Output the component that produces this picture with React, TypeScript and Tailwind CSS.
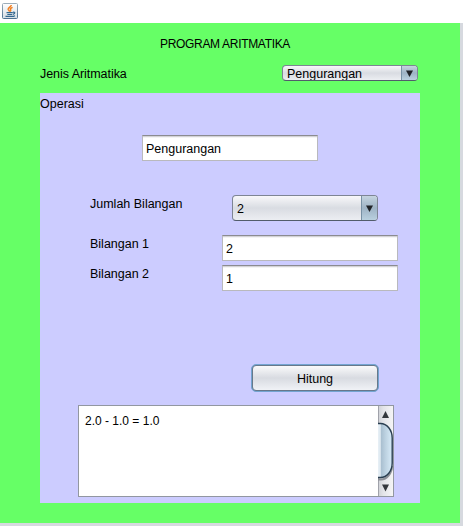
import React from "react";

function JavaIcon() {
  return (
    <svg width="16" height="16" viewBox="0 0 16 16" fill="none">
      <defs>
        <linearGradient id="frame" x1="0" y1="0" x2="0" y2="1">
          <stop offset="0" stopColor="#9cadba" />
          <stop offset="1" stopColor="#4d7391" />
        </linearGradient>
        <linearGradient id="face" x1="0" y1="0" x2="0" y2="1">
          <stop offset="0" stopColor="#ffffff" />
          <stop offset="1" stopColor="#d5dde4" />
        </linearGradient>
      </defs>
      <rect x="0.5" y="0.5" width="15" height="15" rx="1" fill="url(#face)" stroke="url(#frame)" />
      <path d="M9.3 2C9.3 3.8 5.8 4.6 6.2 6.4C6.5 7.3 7.4 7.6 7.5 8.6M10.6 4.4C8.8 5 8 5.8 8.6 6.6C9 7.3 8.6 8 8.2 8.5" stroke="#f07f22" strokeWidth="1.5" />
      <path d="M4.5 9.6H10.8M5.3 11.5H10.3M11 9.3C13.4 8.6 13.4 10.8 11 11.4M3.5 13.4H11.5L13 12.8" stroke="#35688f" strokeWidth="1.2" />
    </svg>
  );
}

function DownArrow() {
  return (
    <svg width="7" height="7" viewBox="0 0 7 7">
      <path d="M0 0.5H7L3.5 7Z" fill="#202328" />
    </svg>
  );
}

function Combo({ value, small }: { value: string; small?: boolean }) {
  return (
    <div
      className={
        "flex overflow-hidden rounded-[4px] border border-[#7e8594] border-b-[#525c6b] bg-linear-to-b from-[#f8f8fa] via-[#d9dce2] to-[#eceef2] " +
        (small ? "h-4 w-[136px]" : "h-[26px] w-[146px]")
      }
    >
      <span className={"flex-1 pl-1 " + (small ? "leading-4" : "leading-[26px]")}>{value}</span>
      <span className="flex w-4 items-center justify-center border-l border-[#7891a5] bg-linear-to-b from-[#c5d4df] via-[#9eb3c5] to-[#b9d0df]">
        <DownArrow />
      </span>
    </div>
  );
}

function Field({ value }: { value: string }) {
  return (
    <div className="h-[26px] w-[176px] border border-[#b9b9bd] border-t-[#8b8b90] bg-white pl-[3px] leading-[26px] shadow-[inset_0_1px_0_#d3d3d6,inset_0_2px_0_#f4f4f5]">
      {value}
    </div>
  );
}

function ScrollBar() {
  return (
    <svg width="15" height="90" viewBox="0 0 15 90">
      <defs>
        <linearGradient id="track" x1="0" y1="0" x2="1" y2="0">
          <stop offset="0" stopColor="#cfd1d6" />
          <stop offset="0.35" stopColor="#e3e4e8" />
          <stop offset="1" stopColor="#f5f5f6" />
        </linearGradient>
        <linearGradient id="thumb" x1="0" y1="0" x2="1" y2="0">
          <stop offset="0" stopColor="#e9f1f7" />
          <stop offset="0.17" stopColor="#dce7ef" />
          <stop offset="0.22" stopColor="#a9bfd0" />
          <stop offset="0.55" stopColor="#bed3e2" />
          <stop offset="1" stopColor="#d8ebf8" />
        </linearGradient>
      </defs>
      <rect width="15" height="90" fill="url(#track)" />
      <path d="M0.5 0V90" stroke="#a0a2aa" />
      <path d="M0 73.5H3C9 73.5 14 67 14 60" stroke="#8d9097" strokeWidth="2" fill="none" />
      <path d="M0 17.5H2.5C9 17.5 14.2 24 14.2 32V57C14.2 65 9 71.5 2.5 71.5H0Z" fill="url(#thumb)" />
      <path d="M0 17.5H2.5C9 17.5 14.2 24 14.2 32V57C14.2 65 9 71.5 2.5 71.5H0" fill="none" stroke="#293e50" strokeWidth="1.4" />
      <path d="M4 12H11L7.5 5Z" fill="#34383d" />
      <path d="M4 78.5H11L7.5 85.5Z" fill="#34383d" />
    </svg>
  );
}

export default function App() {
  return (
    <div className="flex h-[526px] w-[463px] flex-col overflow-hidden bg-[#d6d9df] font-['Liberation_Sans',Arial,sans-serif] text-[12.5px] leading-4 text-black">
      <header className="h-[23px] shrink-0 bg-white pt-[3px] pl-0.5">
        <JavaIcon />
      </header>
      <main className="h-[500px] w-[460px] shrink-0 bg-[#66ff66] px-10 pt-[13px]">
        <h1 className="h-[29px] pl-[120px] text-[12px] leading-4 tracking-[-0.32px]">PROGRAM ARITMATIKA</h1>
        <div className="flex h-7 justify-between pr-0.5">
          <span className="pt-px tracking-[-0.05px]">Jenis Aritmatika</span>
          <Combo value="Pengurangan" small />
        </div>
        <section className="flex h-[410px] flex-col bg-[#ccccff] pt-[3px]">
          <h2 className="h-[39px]">Operasi</h2>
          <div className="h-[60px] pl-[102px]">
            <Field value="Pengurangan" />
          </div>
          <div className="flex h-10">
            <span className="w-[192px] pt-px pl-[50px]">Jumlah Bilangan</span>
            <Combo value="2" />
          </div>
          <div className="flex h-[30px]">
            <span className="w-[182px] pt-px pl-[50px]">Bilangan 1</span>
            <Field value="2" />
          </div>
          <div className="flex h-[99px]">
            <span className="w-[182px] pt-px pl-[50px]">Bilangan 2</span>
            <Field value="1" />
          </div>
          <div className="flex h-[41px] pl-[211px]">
            <button className="h-7 w-[128px] rounded-[5px] border border-[#73a4d1] bg-[#73a4d1]">
              <span className="block h-[26px] rounded-[4px] border border-[#68788a] bg-linear-to-b from-[#fafafb] via-[#d8dbe1] to-[#f0f2f6] leading-[27px]">
                Hitung
              </span>
            </button>
          </div>
          <div className="ml-[38px] flex h-[92px] w-[316px] border border-[#9297a1] bg-white">
            <div className="flex-1 pt-[7px] pl-1.5 text-[12px] leading-4">2.0 - 1.0 = 1.0</div>
            <ScrollBar />
          </div>
        </section>
      </main>
    </div>
  );
}
